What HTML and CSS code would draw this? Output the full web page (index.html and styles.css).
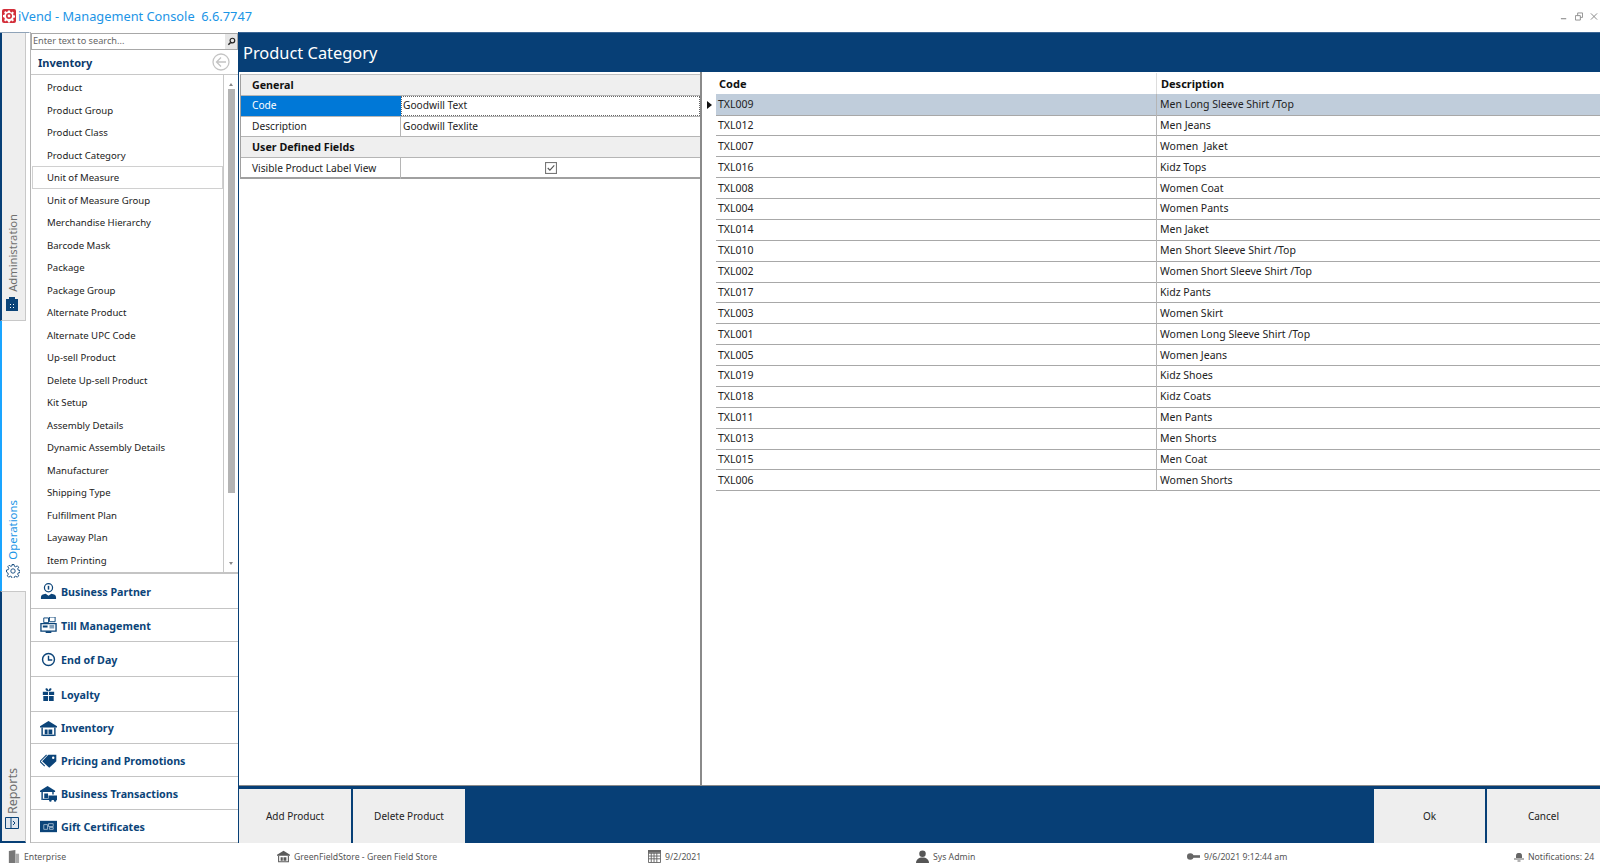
FILE: index.html
```html
<!DOCTYPE html>
<html lang="en">
<head>
<meta charset="utf-8">
<title>iVend - Management Console</title>
<link rel="stylesheet" href="styles.css">
</head>
<body>
<div class="app">
  <header class="titlebar">
    <svg class="logo" viewBox="0 0 14 14"><rect width="14" height="14" rx="2" fill="#d32f3a"/><path d="M6 1.500h2l.3 1.500 1.100.4 1.300-.8 1.200 1.200-.8 1.300.4 1.100 1.500.3v2l-1.500.3-.4 1.100.8 1.300-1.200 1.200-1.300-.8-1.100.4-.3 1.500H6l-.3-1.500-1.100-.4-1.300.8-1.200-1.200.8-1.300-.4-1.100L1 8V6l1.500-.3.4-1.100-.8-1.300 1.200-1.200 1.300.8 1.100-.4z" fill="#fff"/><circle cx="7" cy="7" r="3" fill="#d32f3a"/><circle cx="7" cy="7" r="1.400" fill="#fff"/></svg>
    <span class="apptitle">iVend - Management Console&nbsp; 6.6.7747</span>
    <div class="winbtns">
      <svg viewBox="0 0 9 9"><path d="M1 7h6" stroke="#888" stroke-width="1.200"/></svg>
      <svg viewBox="0 0 9 9"><path d="M.5 3.500h5.500v5h-5.500zM3 3.500V.5h5.500v5H6" fill="none" stroke="#888"/></svg>
      <svg viewBox="0 0 9 9"><path d="M1 1l7 7M8 1L1 8" stroke="#888" stroke-width="1.100"/></svg>
    </div>
  </header>

  <div class="main">
    <nav class="rail">
      <div class="tab tab-admin">
        <svg class="tabicon" viewBox="0 0 12 14"><path d="M0 2h12v12H0z" fill="#0b4479"/><path d="M3 0h6v3H3z" fill="#0b4479"/><path d="M4 7h1v1H4zM7 7h1v1H7zM4 10h1v1H4zM7 10h1v1H7z" fill="#fff"/></svg>
        <span class="tablabel">Administration</span>
      </div>
      <div class="tab tab-ops">
        <svg class="tabicon" viewBox="0 0 14 14"><path d="M6 .5h2l.4 1.800 1.300.5 1.600-1 1.400 1.400-1 1.600.5 1.300 1.800.4v2l-1.800.4-.5 1.300 1 1.600-1.400 1.400-1.600-1-1.300.5-.4 1.800H6l-.4-1.800-1.300-.5-1.600 1-1.400-1.400 1-1.600-.5-1.300L.5 8V6l1.800-.4.5-1.300-1-1.600 1.400-1.400 1.600 1 1.300-.5z" fill="none" stroke="#0b4479" stroke-width=".9"/><circle cx="7" cy="7" r="2.200" fill="none" stroke="#0b4479" stroke-width=".9"/></svg>
        <span class="tablabel">Operations</span>
      </div>
      <div class="tab tab-reports">
        <svg class="tabicon" viewBox="0 0 14 14"><path d="M.5 1.500h13v11H.5z" fill="#dfe6ee" stroke="#0b4479"/><path d="M6 1.500v11M8 5l2 2-2 2" fill="none" stroke="#0b4479"/></svg>
        <span class="tablabel">Reports</span>
      </div>
    </nav>

    <aside class="sidebar">
      <div class="search">
        <span class="searchtext">Enter text to search...</span>
        <span class="searchbtn"><svg viewBox="0 0 10 10"><circle cx="6" cy="4" r="2.600" fill="none" stroke="#222" stroke-width="1.300"/><path d="M4 6L1.500 8.500" stroke="#222" stroke-width="1.600"/></svg></span>
      </div>
      <div class="navhead">
        <span>Inventory</span>
        <svg class="backicon" viewBox="0 0 18 18"><circle cx="9" cy="9" r="8" fill="none" stroke="#c4c4c4" stroke-width="1.300"/><path d="M9 4.500L4.500 9 9 13.500M4.500 9H14" fill="none" stroke="#c4c4c4" stroke-width="1.300"/></svg>
      </div>
      <div class="navlistwrap">
        <ul class="navlist">
          <li>Product</li>
          <li>Product Group</li>
          <li>Product Class</li>
          <li>Product Category</li>
          <li class="hover">Unit of Measure</li>
          <li>Unit of Measure Group</li>
          <li>Merchandise Hierarchy</li>
          <li>Barcode Mask</li>
          <li>Package</li>
          <li>Package Group</li>
          <li>Alternate Product</li>
          <li>Alternate UPC Code</li>
          <li>Up-sell Product</li>
          <li>Delete Up-sell Product</li>
          <li>Kit Setup</li>
          <li>Assembly Details</li>
          <li>Dynamic Assembly Details</li>
          <li>Manufacturer</li>
          <li>Shipping Type</li>
          <li>Fulfillment Plan</li>
          <li>Layaway Plan</li>
          <li>Item Printing</li>
        </ul>
        <div class="scroll">
          <span class="arrow up"></span>
          <span class="thumb"></span>
          <span class="arrow down"></span>
        </div>
      </div>
      <div class="accordion">
        <div class="acc h35"><svg viewBox="0 0 18 18"><circle cx="9" cy="5" r="4.300" fill="none" stroke="#0b4479" stroke-width="1.300"/><path d="M9 3v4" stroke="#0b4479" stroke-width="1.600"/><path d="M1 17v-2c0-2 2-3 5-3.500L9 13.500l3-2c3 .5 5 1.500 5 3.500v2z" fill="#0b4479"/></svg><span>Business Partner</span></div>
        <div class="acc h33"><svg viewBox="0 0 18 18"><path d="M4 1h5v5H4zM10 0h6v5h-6z" fill="none" stroke="#0b4479"/><path d="M1 7h16v8H1z" fill="none" stroke="#0b4479" stroke-width="1.400"/><path d="M3 9h5v2H3zM6 15h6v2H6z" fill="#0b4479"/><path d="M10 9h5v1h-5zM10 11h5v1h-5z" fill="#0b4479"/></svg><span>Till Management</span></div>
        <div class="acc h35"><svg viewBox="0 0 18 18"><circle cx="9" cy="9" r="6.300" fill="none" stroke="#0b4479" stroke-width="1.500"/><path d="M9 5v4.500h4" fill="none" stroke="#0b4479" stroke-width="1.500"/></svg><span>End of Day</span></div>
        <div class="acc h35"><svg viewBox="0 0 18 18"><path d="M3 6h5.500v3.500H3zM9.500 6H15v3.500H9.500zM3.500 10.500h5V16h-5zM9.500 10.500h5V16h-5z" fill="#0b4479"/><path d="M8.500 5.500C6 5.500 5 3 6.500 2.500S9 4 9 5.500C9 4 10 2 11.500 2.500S12 5.500 9.500 5.500" fill="#0b4479"/></svg><span>Loyalty</span></div>
        <div class="acc h32"><svg viewBox="0 0 18 18"><path d="M0 6.500L9 1l9 5.500V8H0z" fill="#0b4479"/><path d="M1.500 8h1.500v9H1.500zM15 8h1.500v9H15z" fill="#0b4479"/><path d="M3 15.500h12V17H3z" fill="#0b4479"/><path d="M5 10h3v5H5zM9 10h4v5H9z" fill="#0b4479"/></svg><span>Inventory</span></div>
        <div class="acc h33"><svg viewBox="0 0 18 18"><path d="M8 3h8.500v7L9 17 1.500 10z" fill="#0b4479" transform="translate(.8 -.2)"/><path d="M7 3L0 10l5 5" fill="none" stroke="#0b4479" stroke-width="1.200"/><circle cx="14" cy="6" r="1.300" fill="#fff"/></svg><span>Pricing and Promotions</span></div>
        <div class="acc h33"><svg viewBox="0 0 18 18"><path d="M0 6L8 1l8 5v1.500H0z" fill="#0b4479"/><path d="M1.500 7.500H3V16H1.500zM13 7.500h1.500V10H13z" fill="#0b4479"/><path d="M4.500 9h4v5h-4zM9 11h9v5H9zM3 14.500h6V16H3z" fill="#0b4479"/><circle cx="11" cy="16.500" r="1.300" fill="#0b4479"/><circle cx="16" cy="16.500" r="1.300" fill="#0b4479"/></svg><span>Business Transactions</span></div>
        <div class="acc h33"><svg viewBox="0 0 18 18"><path d="M0 3h18v12H0z" fill="#0b4479"/><path d="M4 7h4v5H4zM9 6h5v3H9zM10 10h4v2h-4z" fill="none" stroke="#bcd" stroke-width=".8"/></svg><span>Gift Certificates</span></div>
      </div>
    </aside>

    <section class="content">
      <h1 class="pagehead">Product Category</h1>
      <div class="panes">
        <div class="leftpane">
          <div class="propgrid">
            <div class="pcat">General</div>
            <div class="prow selected"><div class="pname">Code</div><div class="pval focus">Goodwill Text</div></div>
            <div class="prow"><div class="pname">Description</div><div class="pval">Goodwill Texlite</div></div>
            <div class="pcat">User Defined Fields</div>
            <div class="prow last"><div class="pname">Visible Product Label View</div><div class="pval center"><svg class="check" viewBox="0 0 11 11"><rect x=".5" y=".5" width="10" height="10" fill="#fff" stroke="#777"/><path d="M2.500 5.500l2 2 4-4.500" fill="none" stroke="#555" stroke-width="1"/></svg></div></div>
          </div>
        </div>
        <div class="rightpane">
          <div class="gridhead"><div class="gi"></div><div class="gc">Code</div><div class="gd">Description</div></div>
          <div class="grow active"><div class="gi"><span class="tri"></span></div><div class="gc">TXL009</div><div class="gd">Men Long Sleeve Shirt /Top</div></div>
          <div class="grow"><div class="gi"></div><div class="gc">TXL012</div><div class="gd">Men Jeans</div></div>
          <div class="grow"><div class="gi"></div><div class="gc">TXL007</div><div class="gd">Women&nbsp; Jaket</div></div>
          <div class="grow"><div class="gi"></div><div class="gc">TXL016</div><div class="gd">Kidz Tops</div></div>
          <div class="grow"><div class="gi"></div><div class="gc">TXL008</div><div class="gd">Women Coat</div></div>
          <div class="grow"><div class="gi"></div><div class="gc">TXL004</div><div class="gd">Women Pants</div></div>
          <div class="grow"><div class="gi"></div><div class="gc">TXL014</div><div class="gd">Men Jaket</div></div>
          <div class="grow"><div class="gi"></div><div class="gc">TXL010</div><div class="gd">Men Short Sleeve Shirt /Top</div></div>
          <div class="grow"><div class="gi"></div><div class="gc">TXL002</div><div class="gd">Women Short Sleeve Shirt /Top</div></div>
          <div class="grow"><div class="gi"></div><div class="gc">TXL017</div><div class="gd">Kidz Pants</div></div>
          <div class="grow"><div class="gi"></div><div class="gc">TXL003</div><div class="gd">Women Skirt</div></div>
          <div class="grow"><div class="gi"></div><div class="gc">TXL001</div><div class="gd">Women Long Sleeve Shirt /Top</div></div>
          <div class="grow"><div class="gi"></div><div class="gc">TXL005</div><div class="gd">Women Jeans</div></div>
          <div class="grow"><div class="gi"></div><div class="gc">TXL019</div><div class="gd">Kidz Shoes</div></div>
          <div class="grow"><div class="gi"></div><div class="gc">TXL018</div><div class="gd">Kidz Coats</div></div>
          <div class="grow"><div class="gi"></div><div class="gc">TXL011</div><div class="gd">Men Pants</div></div>
          <div class="grow"><div class="gi"></div><div class="gc">TXL013</div><div class="gd">Men Shorts</div></div>
          <div class="grow"><div class="gi"></div><div class="gc">TXL015</div><div class="gd">Men Coat</div></div>
          <div class="grow"><div class="gi"></div><div class="gc">TXL006</div><div class="gd">Women Shorts</div></div>
        </div>
      </div>
      <div class="actions">
        <button class="btn">Add Product</button>
        <button class="btn">Delete Product</button>
        <span class="spacer"></span>
        <button class="btn btn-r">Ok</button>
        <button class="btn btn-r">Cancel</button>
      </div>
    </section>
  </div>

  <footer class="status">
    <div class="si"><svg viewBox="0 0 12 14"><path d="M1 1l7-1v14H1z" fill="#777"/><path d="M8 4h4v10H8z" fill="#aaa"/></svg><span>Enterprise</span></div>
    <div class="si"><svg viewBox="0 0 18 18"><path d="M0 6.500L9 1l9 5.500V8H0z" fill="#5a5a5a"/><path d="M1.500 8H3v9H1.500zM15 8h1.500v9H15zM3 15.500h12V17H3zM5 10h3v5H5zM9 10h4v5H9z" fill="#5a5a5a"/></svg><span>GreenFieldStore - Green Field Store</span></div>
    <div class="si"><svg viewBox="0 0 14 14"><path d="M.5.500h13v13H.5zM.5 3.500h13M.5 6.500h13M.5 9.500h13M3.500 3v10.500M6.500 3v10.500M9.500 3v10.500" fill="none" stroke="#666"/><path d="M0 0h14v3H0z" fill="#666"/></svg><span>9/2/2021</span></div>
    <div class="si"><svg viewBox="0 0 14 14"><circle cx="7" cy="4" r="3.500" fill="#555"/><path d="M0 14c0-4 3-6 7-6s7 2 7 6z" fill="#555"/></svg><span>Sys Admin</span></div>
    <div class="si"><svg viewBox="0 0 12 12"><circle cx="3" cy="6" r="3" fill="#666"/><path d="M5 4.800h7v2.400H5z" fill="#666"/></svg><span>9/6/2021 9:12:44 am</span></div>
    <div class="si"><svg class="bell" viewBox="0 0 10 10"><path d="M2 6V3.500C2 1.500 3.500 1 5 1s3 .5 3 2.500V6z" fill="#666"/><path d="M0 6.500h10v1H0zM3.500 8.500h3v1h-3z" fill="#666"/></svg><span>Notifications: 24</span></div>
  </footer>
</div>
</body>
</html>
```
FILE: styles.css
```css
* { box-sizing: border-box; }
html, body { margin: 0; padding: 0; height: 867px; overflow: hidden; background: #fff; }
body { font-family: "Noto Sans", Tahoma, sans-serif; font-size: 10.500px; color: #222; }
ul { margin: 0; padding: 0; list-style: none; }
h1 { margin: 0; }

.app { display: grid; grid-template-rows: 32px 811px 24px; width: 1600px; height: 867px; }

.titlebar { display: flex; align-items: center; padding: 0 2px 0 2px; background: #fff; }
.logo { width: 14px; height: 14px; margin-right: 2px; flex: none; }
.apptitle { font-size: 12.800px; color: #1c95e6; letter-spacing: 0; }
.winbtns { margin-left: auto; display: flex; gap: 7px; }
.winbtns svg { width: 8px; height: 9px; }

.main { display: grid; grid-template-columns: 30px 208px 1fr; min-height: 0; }

.rail { display: flex; flex-direction: column; background: #fff; border-top: 1px solid #8fa3b8; border-right: 1px solid transparent; }
.tab { display: flex; flex-direction: column-reverse; align-items: center; justify-content: flex-start; gap: 5px; border-left: 2px solid #073f76; width: 26px; padding: 0 3px 9px 0; background: #eee; border-right: 1px solid #c8c8c8; border-bottom: 1px solid #c8c8c8; }
.tab-admin { height: 288px; }
.tab-ops { height: 270px; background: #fff; border-left-color: #1aa5ff; border-right: 0; border-bottom: 0; padding-bottom: 13px; gap: 4px; }
.tab-reports { height: 252px; border-top: 1px solid #c8c8c8; border-bottom: 2px solid #073f76; padding-bottom: 11px; gap: 2px; }
.tabicon { width: 14px; height: 14px; flex: none; }
.tablabel { writing-mode: vertical-rl; transform: rotate(180deg); font-size: 11.200px; color: #6f6f6f; }
.tab-ops .tablabel { color: #1c95e6; font-size: 11.400px; }
.tab-reports .tablabel { font-size: 12.600px; }

.sidebar { display: flex; flex-direction: column; border-left: 1px solid #b5b5b5; min-height: 0; }
.search { height: 17px; display: flex; margin: 1px 0 0; border: 1px solid #a8a8a8; background: #fff; }
.searchtext { flex: 1; color: #666; padding-left: 1px; font-size: 9.200px; line-height: 13px; }
.searchbtn { width: 12px; background: #e6e6e6; display: flex; align-items: center; justify-content: center; }
.searchbtn svg { width: 9px; height: 9px; }
.navhead { height: 26px; display: flex; align-items: center; justify-content: space-between; padding: 1px 8px 0 7px; font-weight: 700; font-size: 11px; color: #0b3a6b; border-bottom: 1px solid #c8c8c8; }
.backicon { width: 18px; height: 18px; margin-top: -1px; }
.navlistwrap { height: 499px; display: flex; flex: none; border-bottom: 2px solid #c4c4c4; }
.navlist { flex: 1; padding-top: 1px; border-right: 1px solid #c8c8c8; font-size: 9.600px; }
.navlist li { height: 22.500px; line-height: 21px; padding-left: 14px; border: 1px solid transparent; margin-left: 1px; }
.navlist li.hover { border-color: #d0d0d0; }
.scroll { width: 14px; flex: none; display: flex; flex-direction: column; align-items: center; padding: 6px 0 5px 0; }
.arrow { width: 0; height: 0; border: 2.500px solid transparent; }
.arrow.up { border-bottom: 3px solid #888; }
.arrow.down { border-top: 3px solid #888; margin-top: auto; }
.thumb { width: 7px; height: 404px; background: #b4b4b4; margin-top: 3px; }

.accordion { flex: 1; display: flex; flex-direction: column; }
.acc { display: flex; align-items: center; gap: 4px; padding: 1px 0 0 9px; font-weight: 700; font-size: 10.700px; color: #0b4479; border-bottom: 1px solid #c4c4c4; }
.acc svg { width: 17px; height: 17px; flex: none; }
.h35 { height: 35px; }
.h33 { height: 33px; }
.h32 { height: 32px; }

.content { display: flex; flex-direction: column; border-left: 1px solid #073f76; min-height: 0; min-width: 0; }
.pagehead { height: 40px; background: #073f76; color: #fff; font-weight: 400; font-size: 16.400px; line-height: 39px; padding-left: 4px; flex: none; border-top: 1px solid #3a6594; }
.panes { flex: 1; display: flex; min-height: 0; }
.leftpane { width: 463px; flex: none; border-right: 2px solid #8a8a8a; padding-top: 2px; font-size: 10.200px; }
.propgrid { margin-left: 1px; border-left: 1px solid #a0a0a0; border-top: 1px solid #c0c0c0; }
.pcat { height: 20.800px; line-height: 20.500px; background: #efefef; font-weight: 700; font-size: 10.700px; color: #111; padding-left: 11px; border-bottom: 1px solid #b5b5b5; }
.prow { display: grid; grid-template-columns: 160px 1fr; height: 20.800px; line-height: 19px; border-bottom: 1px solid #b5b5b5; }
.prow.last { border-bottom: 2px solid #a0a0a0; height: 21px; line-height: 20.500px; }
.pname { padding-left: 11px; border-right: 1px solid #b5b5b5; }
.pval { padding-left: 2px; }
.pval.center { display: flex; align-items: center; justify-content: center; padding: 0 0 0 0; }
.selected .pname { background: #0078d7; color: #fff; border-right: 0; }
.focus { outline: 1px dotted #666; outline-offset: -1px; }
.check { width: 12px; height: 12px; }

.rightpane { flex: 1; min-width: 0; padding-top: 1px; }
.gridhead, .grow { display: grid; grid-template-columns: 14px 440px 1fr; }
.gridhead { height: 21px; line-height: 21px; font-weight: 700; font-size: 11px; color: #111; }
.gridhead .gc { padding-left: 3px; }
.gridhead .gd { padding-left: 4px; border-left: 1px solid #ddd; }
.grow { height: 20.875px; line-height: 20.500px; }
.grow .gc, .grow .gd { border-bottom: 1px solid #a8a8a8; }
.grow .gc { padding-left: 2px; }
.grow .gd { padding-left: 3px; border-left: 1px solid #b5b5b5; }
.grow.active .gc, .grow.active .gd { background: #c0cddb; }
.gi { display: flex; align-items: center; padding-left: 5px; }
.tri { width: 0; height: 0; border: 4px solid transparent; border-left: 5px solid #111; border-right: 0; }

.actions { height: 58px; flex: none; display: flex; gap: 2px; background: #073f76; padding: 3px 0 0 0; border-top: 1px solid #8a8a8a; }
.btn { width: 112px; height: 54px; border: 0; background: #eee; color: #222; font-family: inherit; font-size: 10px; padding: 0; }
.btn-r { width: 111px; }
.actions .btn:last-child { width: 113px; }
.spacer { flex: 1; }

.status { display: grid; grid-template-columns: 270px 371px 268px 271px 327px 1fr; padding: 3px 0 0 7px; align-items: center; font-size: 8.700px; color: #555; }
.si { display: flex; align-items: center; gap: 4px; white-space: nowrap; }
.si svg { width: 13px; height: 13px; flex: none; }
.si svg.bell { width: 10px; height: 10px; }
```
